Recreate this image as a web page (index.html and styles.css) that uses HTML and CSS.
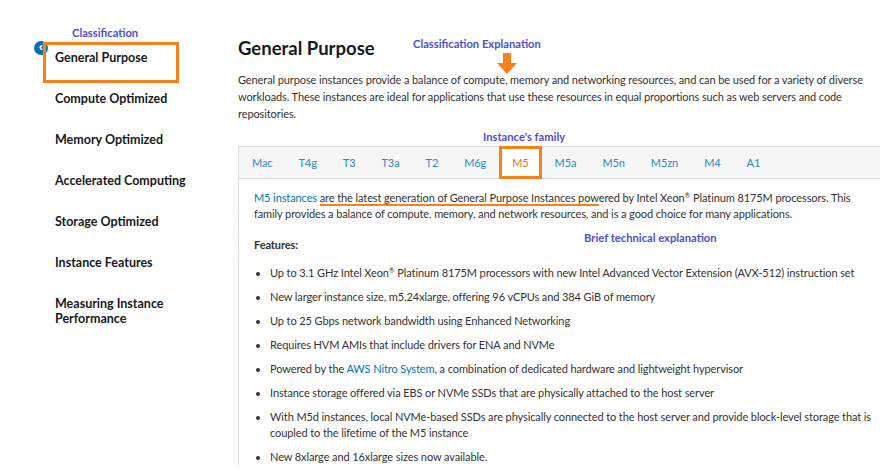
FILE: index.html
```html
<!DOCTYPE html>
<html>
<head>
<meta charset="utf-8">
<link rel="stylesheet" href="styles.css">
</head>
<body>
<div class="page">
  <aside class="sidebar">
    <div class="note note-class">Classification</div>
    <nav class="nav">
      <div class="nav-item active"><span class="collapse">&#8249;</span>General Purpose</div>
      <div class="nav-item">Compute Optimized</div>
      <div class="nav-item">Memory Optimized</div>
      <div class="nav-item">Accelerated Computing</div>
      <div class="nav-item">Storage Optimized</div>
      <div class="nav-item">Instance Features</div>
      <div class="nav-item">Measuring Instance<br>Performance</div>
    </nav>
  </aside>
  <main class="main">
    <div class="head-row">
      <h1 class="title">General Purpose</h1>
      <div class="note note-expl">Classification Explanation
        <svg class="arrow" width="20" height="21" viewBox="0 0 20 21"><path d="M6 0h8v10h6L10 21 0 10h6z" fill="#f5821f"/></svg>
      </div>
    </div>
    <p class="intro">General purpose instances provide a balance of compute, memory and networking resources, and can be used for a variety of diverse workloads. These instances are ideal for applications that use these resources in equal proportions such as web servers and code repositories.</p>
    <div class="note note-family">Instance's family</div>
    <div class="tabs">
      <span class="tab">Mac</span>
      <span class="tab">T4g</span>
      <span class="tab">T3</span>
      <span class="tab">T3a</span>
      <span class="tab">T2</span>
      <span class="tab">M6g</span>
      <span class="tab active">M5</span>
      <span class="tab">M5a</span>
      <span class="tab">M5n</span>
      <span class="tab">M5zn</span>
      <span class="tab">M4</span>
      <span class="tab">A1</span>
    </div>
    <section class="panel">
      <p class="desc"><a class="link">M5 instances</a> <span class="mark">are the latest generation of General Purpose Instances pow</span>ered by Intel Xeon<sup>®</sup> Platinum 8175M processors. This family provides a balance of compute, memory, and network resources, and is a good choice for many applications.</p>
      <div class="note note-brief">Brief technical explanation</div>
      <div class="features">Features:</div>
      <ul class="list">
        <li>Up to 3.1 GHz Intel Xeon<sup>®</sup> Platinum 8175M processors with new Intel Advanced Vector Extension (AVX-512) instruction set</li>
        <li>New larger instance size, m5.24xlarge, offering 96 vCPUs and 384 GiB of memory</li>
        <li>Up to 25 Gbps network bandwidth using Enhanced Networking</li>
        <li>Requires HVM AMIs that include drivers for ENA and NVMe</li>
        <li>Powered by the <a class="link">AWS Nitro System</a>, a combination of dedicated hardware and lightweight hypervisor</li>
        <li>Instance storage offered via EBS or NVMe SSDs that are physically attached to the host server</li>
        <li>With M5d instances, local NVMe-based SSDs are physically connected to the host server and provide block-level storage that is coupled to the lifetime of the M5 instance</li>
        <li>New 8xlarge and 16xlarge sizes now available.</li>
      </ul>
    </section>
  </main>
</div>
</body>
</html>
```
FILE: styles.css
```css
* { box-sizing: border-box; }
html, body { margin: 0; padding: 0; background: #fff; }
body {
  font-family: Lato, "Liberation Sans", Arial, sans-serif;
  color: #333;
  font-size: 11px;
  letter-spacing: -0.1px;
  overflow: hidden;
  height: 468px;
}
.page { display: flex; }
.note {
  color: #4b4fd8;
  font-weight: bold;
  font-size: 11.2px;
  line-height: 12px;
  letter-spacing: 0;
}
.sidebar { width: 238px; flex: none; padding-top: 27px; }
.note-class { margin-left: 72px; }
.nav { display: flex; flex-direction: column; gap: 26px; margin-top: 11px; padding-left: 55px; }
.nav-item {
  position: relative;
  font-weight: bold;
  font-size: 12.5px;
  line-height: 15px;
  letter-spacing: 0;
  color: #16191f;
}
.nav-item.active::after {
  content: "";
  position: absolute;
  left: -12px; top: -8px;
  width: 130px; height: 35px;
  border: 3px solid #f7821b;
}
.collapse {
  position: absolute;
  left: -21px; top: -9px;
  width: 14px; height: 14px;
  border-radius: 50%;
  background: #0f6cb6;
  color: #fff;
  font-size: 13px;
  line-height: 12px;
  text-align: center;
  font-weight: bold;
  font-family: "Liberation Sans", sans-serif;
}
.main { flex: 1; min-width: 0; }
.head-row { display: flex; align-items: flex-start; padding-top: 37px; }
.title { margin: 0; font-size: 18.5px; line-height: 22px; letter-spacing: 0; color: #16191f; font-weight: bold; width: 175px; }
.note-expl { position: relative; margin-top: 1px; }
.arrow { position: absolute; left: 84px; top: 15px; }
.intro { margin: 12px 0 0; line-height: 17px; padding-right: 12px; }
.note-family { margin: 9px 0 0 245px; }
.tabs {
  display: flex;
  margin-top: 3px;
  height: 33px;
  background: #f6f6f6;
  border-top: 1px solid #dcdcdc;
  border-bottom: 1px solid #dcdcdc;
  border-left: 1px solid #e0e0e0;
}
.tab {
  display: flex;
  align-items: center;
  padding: 0 13px;
  color: #2a8ac8;
  font-size: 11px;
}
.tab.active {
  color: #ec7211;
  background: #fff;
  box-shadow: inset 0 0 0 3px #f7821b;
  margin: -1px 0;
}
.panel { position: relative; border-left: 1px solid #e0e0e0; padding: 11px 2px 0 15px; }
.link { color: #0073bb; text-decoration: none; }
.desc { margin: 0; line-height: 16px; }
.mark { border-bottom: 2px solid #f7821b; }
sup { font-size: 7px; line-height: 0; vertical-align: 4px; }
.note-brief { position: absolute; left: 345px; top: 53px; }
.features { font-weight: bold; margin-top: 16px; line-height: 14px; }
.list { margin: 13px 0 0; padding-left: 16px; list-style: disc; }
.list li { line-height: 16px; margin-bottom: 8px; }
```
